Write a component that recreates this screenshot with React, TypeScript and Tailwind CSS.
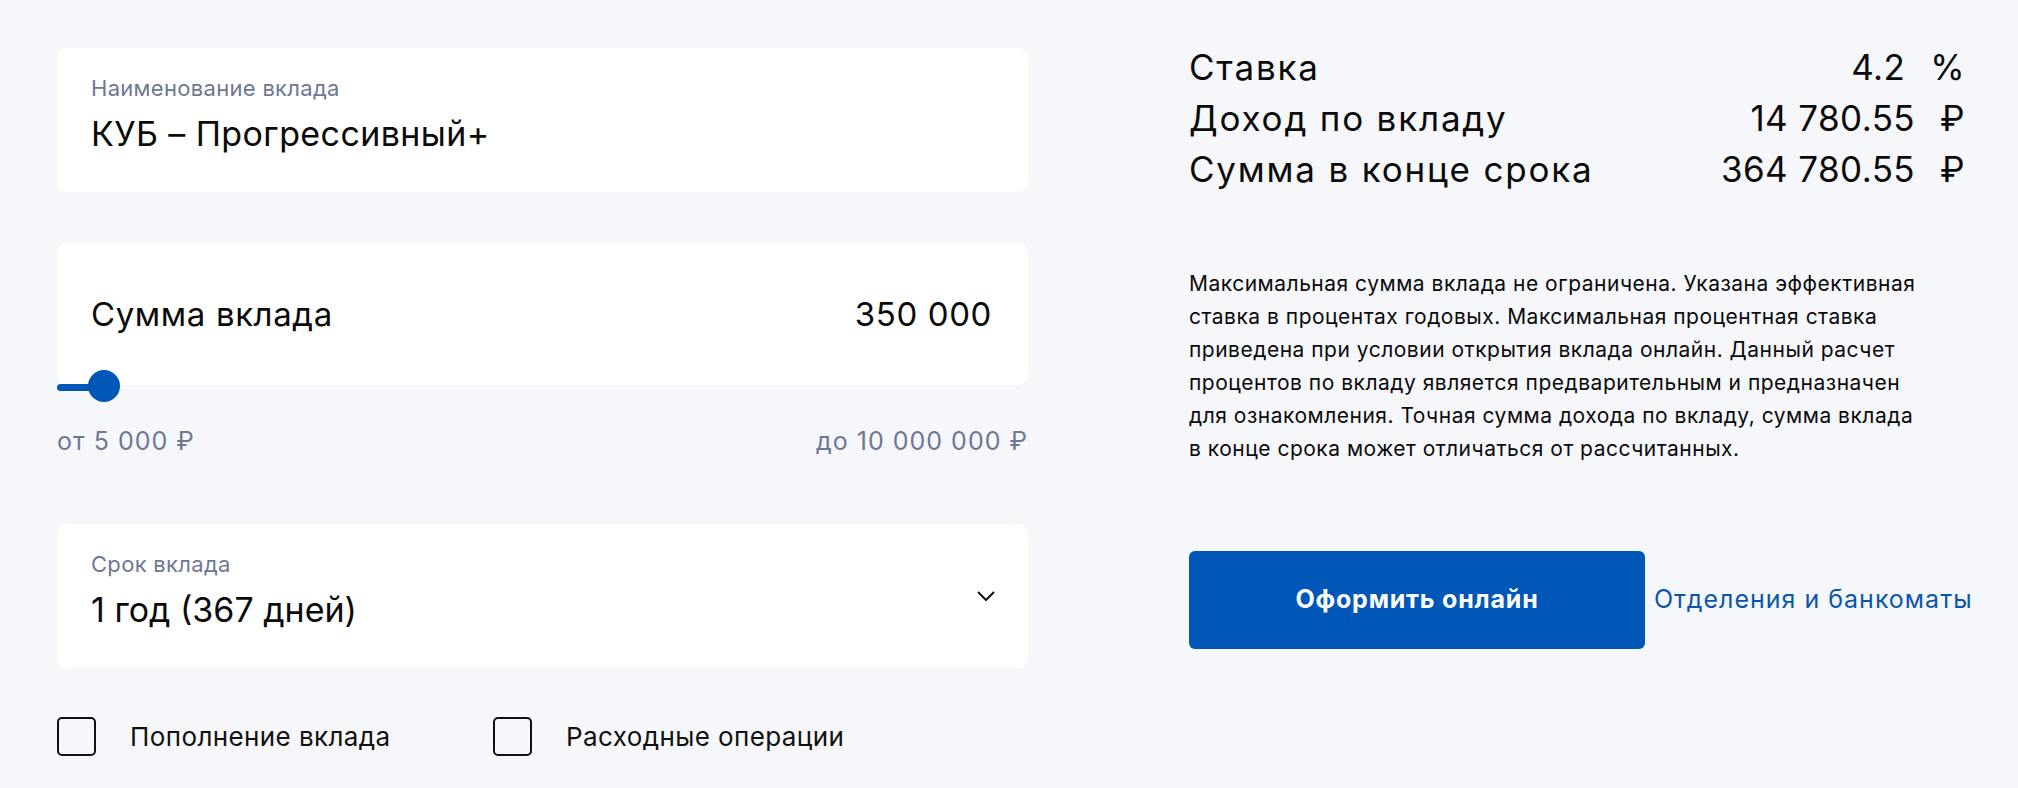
import { useState } from "react";

const stats = [
  { label: "Ставка", value: "4.2", unit: "%" },
  { label: "Доход по вкладу", value: "14 780.55", unit: "₽" },
  { label: "Сумма в конце срока", value: "364 780.55", unit: "₽" },
];

const disclaimer = [
  "Максимальная сумма вклада не ограничена. Указана эффективная",
  "ставка в процентах годовых. Максимальная процентная ставка",
  "приведена при условии открытия вклада онлайн. Данный расчет",
  "процентов по вкладу является предварительным и предназначен",
  "для ознакомления. Точная сумма дохода по вкладу, сумма вклада",
  "в конце срока может отличаться от рассчитанных.",
];

const Checkbox = ({ label, checked, onToggle, className = "" }: { label: string; checked: boolean; onToggle: () => void; className?: string }) => (
  <label className={`flex items-center gap-[34px] cursor-pointer ${className}`} onClick={onToggle}>
    <span className="w-[39px] h-[39px] rounded-[5px] border-2 border-[#111] flex items-center justify-center shrink-0">
      {checked && <span className="w-[19px] h-[19px] rounded-[2px] bg-[#0057b8]" />}
    </span>
    <span className="text-[26px] leading-[32px] tracking-[0.4px] text-[#111]">{label}</span>
  </label>
);

const App = () => {
  const [refill, setRefill] = useState(false);
  const [spend, setSpend] = useState(false);

  return (
    <div className="min-h-screen w-full bg-[#f6f7fb] font-['Inter','Noto_Sans',sans-serif] text-[#0b0b0b] flex pl-[57px] pt-[42px] gap-[161px]">
      <div className="w-[971px] mt-[6px] flex flex-col">
        <div className="h-[144px] bg-white rounded-[10px] px-[34px] pt-[26px]">
          <div className="text-[22px] leading-[28px] tracking-[0.3px] text-[#6e7893]">Наименование вклада</div>
          <div className="mt-[12px] text-[34px] leading-[40px] tracking-[0.4px]">КУБ – Прогрессивный+</div>
        </div>

        <div className="relative mt-[51px] h-[142px] bg-white rounded-[10px] pl-[34px] pr-[36px] flex items-center justify-between">
          <span className="text-[33px] leading-[40px] tracking-[0.6px]">Сумма вклада</span>
          <span className="text-[33px] leading-[40px] tracking-[0.6px]">350 000</span>
          <div className="absolute left-0 top-[141px] h-[7px] w-[50px] rounded-l-full bg-[#0057b8]" />
          <div className="absolute left-[31px] top-[127px] w-[32px] h-[32px] rounded-full bg-[#0057b8]" />
        </div>

        <div className="mt-[42px] flex justify-between text-[25px] leading-[28px] tracking-[1px] text-[#6e7893]">
          <span>от 5 000 ₽</span>
          <span>до 10 000 000 ₽</span>
        </div>

        <div className="mt-[69px] h-[144px] bg-white rounded-[10px] pl-[34px] pr-[33px] flex justify-between items-center">
          <div className="self-start pt-[26px]">
            <div className="text-[22px] leading-[28px] tracking-[0.3px] text-[#6e7893]">Срок вклада</div>
            <div className="mt-[12px] text-[34px] leading-[40px]">1 год (367 дней)</div>
          </div>
          <svg width="18" height="10" viewBox="0 0 18 10" fill="none" stroke="#111" strokeWidth="2">
            <path d="M1 1l8 8 8-8" />
          </svg>
        </div>

        <div className="mt-[49px] flex items-center">
          <Checkbox label="Пополнение вклада" checked={refill} onToggle={() => setRefill(!refill)} className="w-[436px]" />
          <Checkbox label="Расходные операции" checked={spend} onToggle={() => setSpend(!spend)} />
        </div>
      </div>

      <div className="w-[776px] flex flex-col">
        {stats.map((s) => (
          <div key={s.label} className="flex justify-between text-[35px] leading-[51px]">
            <span className="tracking-[1.8px]">{s.label}</span>
            <span className="flex tracking-[0.4px]">
              <span>{s.value}</span>
              <span className="ml-[25px]">{s.unit}</span>
            </span>
          </div>
        ))}

        <p className="mt-[72px] text-[21px] leading-[33px] tracking-[0.5px] whitespace-nowrap">
          {disclaimer.map((line, i) => (
            <span key={i} className="block">{line}</span>
          ))}
        </p>

        <div className="mt-[86px] flex items-center gap-[9px]">
          <button className="shrink-0 w-[456px] h-[98px] rounded-[6px] bg-[#0057b8] text-white text-[25px] tracking-[0.8px] font-bold">
            Оформить онлайн
          </button>
          <a href="#" className="text-[25px] tracking-[1px] text-[#0a56ad] whitespace-nowrap">Отделения и банкоматы</a>
        </div>
      </div>
    </div>
  );
};

export default App;
